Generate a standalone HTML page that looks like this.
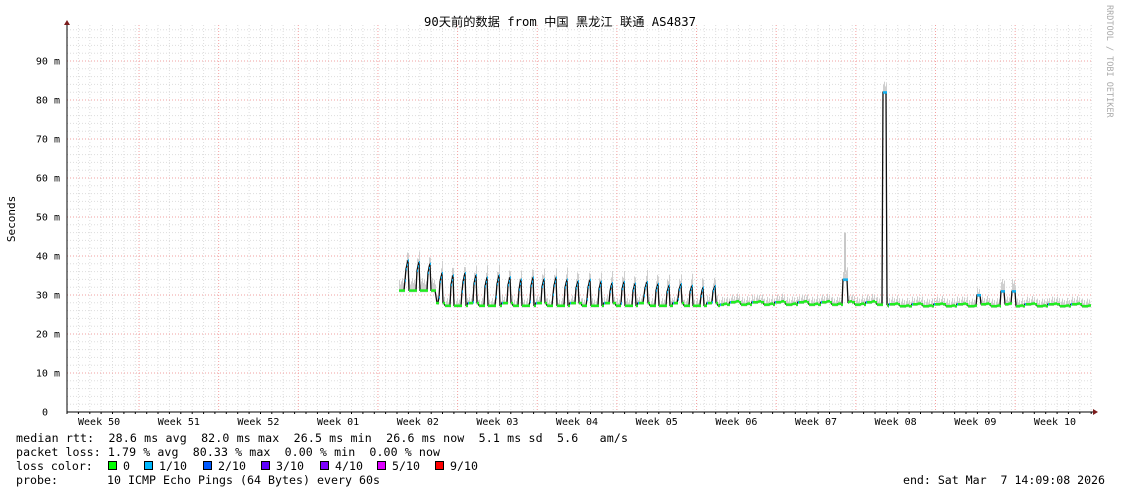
<!DOCTYPE html>
<html><head><meta charset="utf-8"><style>
body{margin:0;background:#fff;width:1121px;height:494px;overflow:hidden}
svg{display:block}
text{font-family:"DejaVu Sans Mono","Liberation Mono",monospace}
</style></head><body>
<svg id="s" width="1121" height="494" xmlns="http://www.w3.org/2000/svg">
<rect width="1121" height="494" fill="#fff"/>
<g id="grid"></g>
<g id="data"></g>
<text x="560" y="26" font-size="12" text-anchor="middle" textLength="272" lengthAdjust="spacingAndGlyphs" style='font-family:"DejaVu Sans Mono","Noto Sans CJK SC",monospace'>90天前的数据 from 中国 黑龙江 联通 AS4837</text>
<text transform="translate(1107,5) rotate(90)" font-size="8.5" fill="#aaa">RRDTOOL / TOBI OETIKER</text>
<text transform="translate(15,219) rotate(-90)" font-size="11" text-anchor="middle">Seconds</text>
<g font-size="10" text-anchor="end" id="ylab"></g>
<g font-size="10" text-anchor="middle" id="xlab"></g>
<line x1="67" y1="412" x2="1093" y2="412" stroke="#000"/>
<line x1="67" y1="412" x2="67" y2="24" stroke="#000"/>
<polygon points="1093,409 1098,412 1093,415" fill="#7b1c1c"/>
<polygon points="64,25 67,20 70,25" fill="#7b1c1c"/>
<g font-size="11.6" fill="#000">
<text x="16" y="442" xml:space="preserve" textLength="612" lengthAdjust="spacing">median rtt:  28.6 ms avg  82.0 ms max  26.5 ms min  26.6 ms now  5.1 ms sd  5.6   am/s</text>
<text x="16" y="456" xml:space="preserve" textLength="424" lengthAdjust="spacing">packet loss: 1.79 % avg  80.33 % max  0.00 % min  0.00 % now</text>
<text x="16" y="470" xml:space="preserve">loss color:</text>
<text x="16" y="484" xml:space="preserve" textLength="364" lengthAdjust="spacing">probe:       10 ICMP Echo Pings (64 Bytes) every 60s</text>
<text x="1105" y="484" text-anchor="end" xml:space="preserve" textLength="202" lengthAdjust="spacing">end: Sat Mar  7 14:09:08 2026</text>
</g>
<g font-size="11.6" id="leg"></g>
</svg>
<script>
var NS="http://www.w3.org/2000/svg";
function el(p,t,a,txt){var e=document.createElementNS(NS,t);for(var k in a)e.setAttribute(k,a[k]);if(txt!=null)e.textContent=txt;document.getElementById(p).appendChild(e);return e;}
function Y(ms){return 412-ms*3.9;}
for(var x=67;x<1093;x+=11.38){el("grid","line",{x1:x.toFixed(1),y1:25,x2:x.toFixed(1),y2:412,stroke:"#ddd","stroke-dasharray":"1,2"});}
for(var m=2;m<=98;m+=2){var y=Y(m);el("grid","line",{x1:67,y1:y,x2:1093,y2:y,stroke:"#ddd","stroke-dasharray":"1,2"});}
for(var m=10;m<=90;m+=10){var y=Y(m);el("grid","line",{x1:67,y1:y,x2:1093,y2:y,stroke:"#f0a0a0","stroke-dasharray":"1,2"});el("ylab","text",{x:60,y:y+3.5},m+" m");}
el("ylab","text",{x:48,y:415.5},"0");
var wk=["Week 50","Week 51","Week 52","Week 01","Week 02","Week 03","Week 04","Week 05","Week 06","Week 07","Week 08","Week 09","Week 10"];
for(var i=0;i<13;i++){var xm=139+79.65*(i-1)+39.8;el("xlab","text",{x:xm.toFixed(1),y:425},wk[i]);
 if(i<12){var xr=139+79.65*i;el("grid","line",{x1:xr,y1:25,x2:xr,y2:412,stroke:"#f4a0a0","stroke-dasharray":"1,2"});}}
for(var x=67;x<1093;x+=11.38){el("grid","line",{x1:x.toFixed(1),y1:412,x2:x.toFixed(1),y2:414,stroke:"#000"});}
function prof(x){
 var d=(x-399)/11.38,ph=d-Math.floor(d);var base,peak;
 if(x<436){base=31.2;peak=39;}
 else if(x<720){base=27.3+((Math.floor(d)%3==0)?0.7:0);peak=36-(x-436)/284*3.5;}
 else{base=27.6+((Math.floor(d)%2)?0.6:0);peak=base+0.3;}
 if(x>=888){base=27.2+((Math.floor(d)%2)?0.5:0);peak=base+0.2;}
 var v;
 if(ph<0.5)v=base;else if(ph<0.55)v=base+(peak-base)*0.6*(ph-0.5)/0.05;else if(ph<0.8)v=base+(peak-base)*(0.6+0.4*(ph-0.55)/0.25);else v=base;
 if(x>=843&&x<=847)v=34;
 if(x>=883&&x<=886)v=82;
 if(x>=977&&x<=980)v=30;if(x>=1001&&x<=1004)v=31;if(x>=1012&&x<=1015)v=31;
 return v;}
var pts=[];
for(var x=399;x<=1090;x++){ if(x>=436&&x<437)continue;
 var v=prof(x);pts.push(x+","+Y(v).toFixed(1));
 var h=((x*7)%5)*0.4+(v>30?1.5:0.3);
 el("data","rect",{x:x,y:Y(v+h).toFixed(1),width:1,height:(h*3.9+2).toFixed(1),fill:"#cfcfcf"});
}
el("data","rect",{x:844,y:Y(46),width:2,height:40,fill:"#c8c8c8"});
el("data","polyline",{points:pts.join(" "),fill:"none",stroke:"#111","stroke-width":1.3});
for(var x=399;x<=1090;x++){var v=prof(x);var c=(v<=prof(x-1)+0.2&&v<=29.5)||(x<436&&v<32)?"#20ee20":"#10b0f0";
 el("data","rect",{x:x,y:(Y(v)-1).toFixed(1),width:1,height:2.5,fill:c});}
var lc=[["#00ff00","0",108],["#00b8ff","1/10",144],["#0059ff","2/10",203],["#5e00ff","3/10",261],["#7e00ff","4/10",320],["#dd00ff","5/10",377],["#ff0000","9/10",435]];
for(var i=0;i<lc.length;i++){var lx=lc[i][2];el("leg","rect",{x:lx+0.5,y:461.5,width:8,height:8,fill:lc[i][0],stroke:"#000","stroke-width":1});el("leg","text",{x:lx+15,y:470},lc[i][1]);}
</script>
</body></html>
